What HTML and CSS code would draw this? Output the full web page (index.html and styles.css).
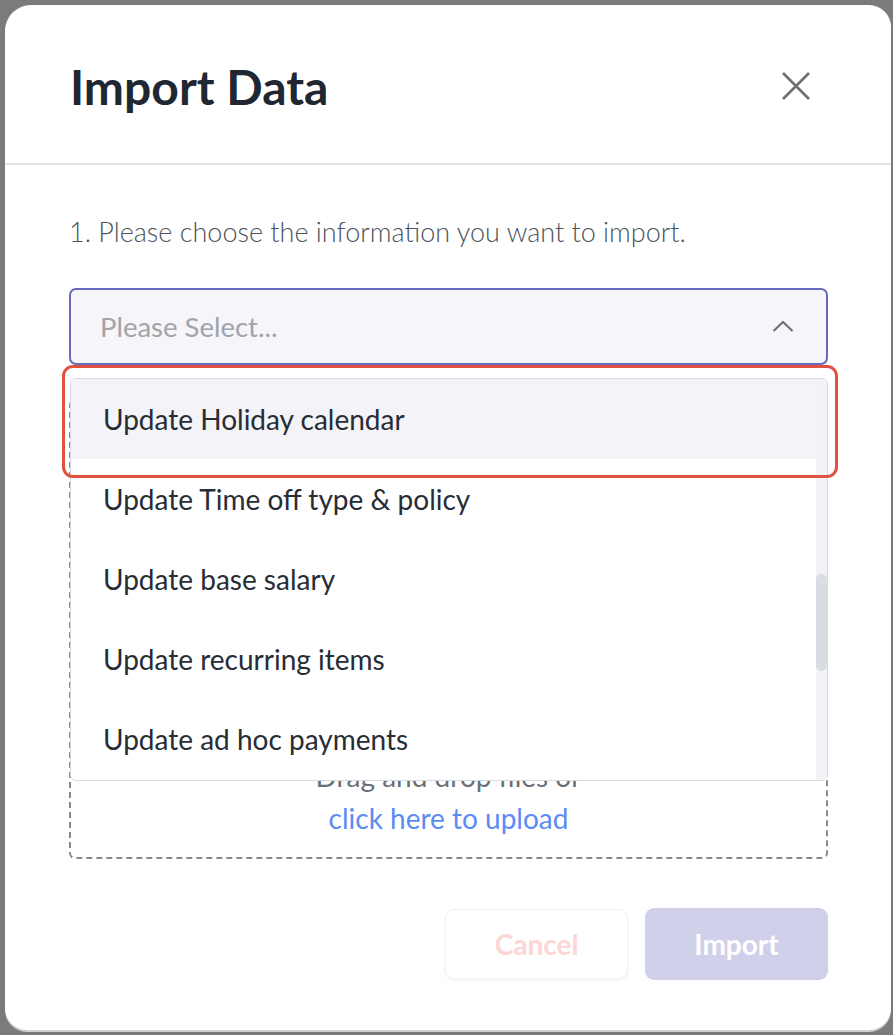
FILE: index.html
```html
<!DOCTYPE html>
<html lang="en">
<head>
<meta charset="utf-8">
<title>Import Data</title>
<link rel="stylesheet" href="styles.css">
</head>
<body>
<div class="backdrop">
  <div class="modal">
    <header class="modal-header">
      <h1 class="modal-title">Import Data</h1>
      <button class="close-btn" aria-label="Close">
        <svg width="30" height="30" viewBox="0 0 30 30"><path d="M2 2 L28 28 M28 2 L2 28" stroke="#6e6e6e" stroke-width="2.6" fill="none"/></svg>
      </button>
    </header>
    <div class="modal-body">
      <p class="step">1. Please choose the information you want to import.</p>
      <div class="select-wrap">
        <div class="select">
          <span class="placeholder">Please Select...</span>
          <svg class="chevron" width="22" height="12" viewBox="0 0 22 12"><path d="M1.5 11 L11 2 L20.5 11" stroke="#6e6e6e" stroke-width="2" fill="none"/></svg>
        </div>
        <div class="dropdown">
          <ul class="options">
            <li class="option active">Update Holiday calendar</li>
            <li class="option">Update Time off type &amp; policy</li>
            <li class="option">Update base salary</li>
            <li class="option">Update recurring items</li>
            <li class="option">Update ad hoc payments</li>
          </ul>
          <div class="scrollbar"><div class="thumb"></div></div>
        </div>
        <div class="callout"></div>
      </div>
      <div class="upload">
        <span class="upload-text">Drag and drop files or</span>
        <a class="upload-link" href="#">click here to upload</a>
      </div>
    </div>
    <footer class="modal-footer">
      <button class="btn btn-cancel">Cancel</button>
      <button class="btn btn-import">Import</button>
    </footer>
  </div>
</div>
</body>
</html>
```
FILE: styles.css
```css
html, body {
  margin: 0;
  padding: 0;
  background: #7b7b7b;
}
body {
  font-family: Lato, "Open Sans", sans-serif;
}
.backdrop {
  padding: 5px 2px 0 5px;
  height: 1035px;
  box-sizing: border-box;
}
.modal {
  width: 886px;
  height: 1025px;
  background: #fff;
  border-radius: 26px 22px 22px 22px;
  box-shadow: 0 2px 0 #cdd0d4;
  display: flex;
  flex-direction: column;
}
.modal-header {
  height: 160px;
  border-bottom: 2px solid #e2e5e9;
  display: flex;
  align-items: center;
  justify-content: space-between;
  padding: 4px 80px 0 65px;
  box-sizing: border-box;
  flex-shrink: 0;
}
.modal-title {
  margin: 0;
  font-size: 48px;
  font-weight: 700;
  color: #1f2732;
}
.close-btn {
  border: none;
  background: none;
  padding: 0;
  width: 30px;
  height: 30px;
  cursor: pointer;
  display: flex;
}
.modal-body {
  padding: 48px 63px 0 64px;
  flex-shrink: 0;
}
.step {
  margin: 0;
  font-size: 27px;
  line-height: 38px;
  font-weight: 300;
  color: #4d535b;
}
.select-wrap {
  position: relative;
  margin-top: 37px;
}
.select {
  height: 77px;
  box-sizing: border-box;
  border: 2px solid #6669bd;
  border-radius: 7px;
  background: #f5f5fa;
  display: flex;
  align-items: center;
  justify-content: space-between;
  padding: 0 32px 0 29px;
}
.placeholder {
  font-size: 27.5px;
  color: #a1a4a9;
}
.chevron {
  margin-top: -2px;
}
.dropdown {
  position: absolute;
  left: 1px;
  right: 0;
  top: 90px;
  height: 403px;
  box-sizing: border-box;
  border: 1.5px solid #d6dae0;
  border-radius: 6px;
  background: #fff;
  display: flex;
  overflow: hidden;
  z-index: 2;
}
.options {
  list-style: none;
  margin: 0;
  padding: 0;
  flex: 1;
}
.option {
  height: 80px;
  display: flex;
  align-items: center;
  padding-left: 32px;
  font-size: 28px;
  color: #272d35;
}
.option.active {
  background: #f3f3f8;
}
.scrollbar {
  width: 11px;
  background: #f2f3f6;
  padding-top: 195px;
  box-sizing: border-box;
}
.thumb {
  height: 97px;
  background: #d8dce3;
  border-radius: 6px;
}
.callout {
  position: absolute;
  left: -7px;
  top: 77px;
  width: 776px;
  height: 113px;
  box-sizing: border-box;
  border: 3.5px solid #e2513f;
  border-radius: 11px;
  z-index: 3;
}
.upload {
  margin-top: 34px;
  height: 460px;
  box-sizing: border-box;
  border: 2px dashed #8a8a8a;
  border-radius: 6px;
  display: flex;
  flex-direction: column;
  justify-content: flex-end;
  align-items: center;
  padding-bottom: 18px;
  font-size: 28px;
  line-height: 42px;
}
.upload-text {
  color: #6a6f76;
}
.upload-link {
  color: #5b8cf2;
  text-decoration: none;
}
.modal-footer {
  display: flex;
  justify-content: flex-end;
  align-items: center;
  gap: 17px;
  padding: 49px 63px 0 0;
}
.btn {
  font-family: Lato, "Open Sans", sans-serif;
  font-size: 28px;
  font-weight: 700;
  border-radius: 9px;
  width: 183px;
  height: 72px;
  cursor: pointer;
}
.btn-cancel {
  background: #fff;
  border: 1.5px solid #f1f1f1;
  color: #fdd6d6;
  height: 70px;
  box-shadow: 0 2px 4px rgba(0,0,0,0.04);
}
.btn-import {
  background: #d1d0ea;
  border: none;
  color: #fff;
}
```
